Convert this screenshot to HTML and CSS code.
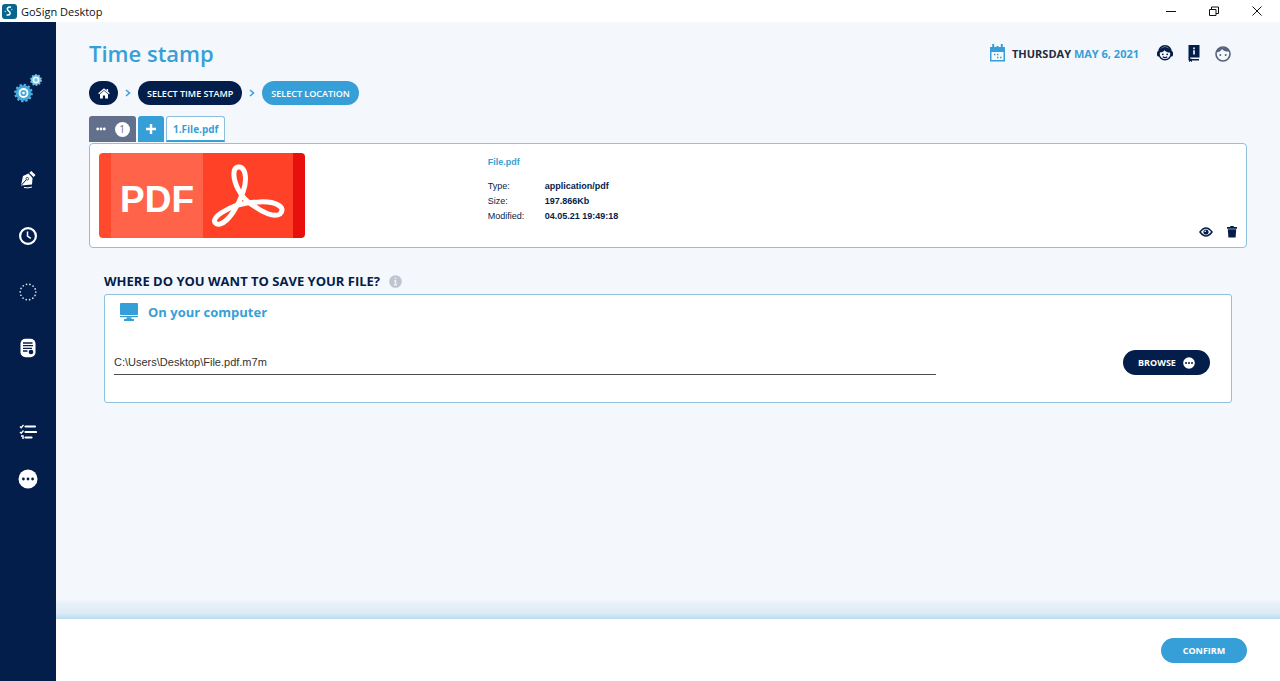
FILE: index.html
```
<!DOCTYPE html>
<html lang="en">
<head>
  <meta charset="UTF-8">
  <meta name="viewport" content="width=device-width, initial-scale=1">
  <title>GoSign Desktop</title>
  <link rel="stylesheet" href="styles.css">
</head>
<body>
  <div class="titlebar">
    <svg class="app-icon" width="15" height="15" viewBox="0 0 15 15" aria-hidden="true">
      <rect width="15" height="15" rx="3" fill="#07658f"/>
      <path d="M9 3.2C6 2.2 4 5 6.5 6.8S9 11.5 4.5 11" fill="none" stroke="#fff" stroke-width="1.5"/>
      <circle cx="3.3" cy="7.5" r=".8" fill="#9ed3ea"/>
      <circle cx="9.8" cy="5.5" r=".7" fill="#9ed3ea"/>
    </svg>
    <span class="app-name">GoSign Desktop</span>
    <div class="window-buttons">
      <button type="button" aria-label="Minimize"><svg width="12" height="12" viewBox="0 0 12 12"><path d="M1 6.500h10"/></svg></button>
      <button type="button" aria-label="Restore"><svg width="12" height="12" viewBox="0 0 12 12"><path d="M1.500 4.500h6.500v6h-6.500zM3.500 4.500v-2.500h7v6.500h-2.500"/></svg></button>
      <button type="button" aria-label="Close"><svg width="12" height="12" viewBox="0 0 12 12"><path d="M1.500 1.500l9 9M10.500 1.500l-9 9"/></svg></button>
    </div>
  </div>

  <div class="app">
    <nav class="sidebar" aria-label="Main menu">
      <div class="brand">
        <svg width="30" height="32" viewBox="0 0 30 32" aria-hidden="true">
          <circle cx="10.500" cy="21" r="8" fill="none" stroke="#58b5e0" stroke-width="2.500" stroke-dasharray="2.200 1.990"/>
          <circle cx="10.500" cy="21" r="7.800" fill="#45a9da"/>
          <circle cx="10.500" cy="21" r="4" fill="none" stroke="#fff" stroke-width="1.800"/>
          <circle cx="10.500" cy="21" r="1.300" fill="#fff"/>
          <circle cx="23" cy="8" r="5" fill="none" stroke="#58b5e0" stroke-width="2" stroke-dasharray="1.700 1.442"/>
          <circle cx="23" cy="8" r="5" fill="#7cc6e8"/>
          <circle cx="23" cy="8" r="2.600" fill="none" stroke="#fff" stroke-width="1.400"/>
        </svg>
      </div>
      <div class="menu">
        <button type="button" aria-label="Sign">
          <svg width="18" height="20" viewBox="0 0 18 20">
            <path d="M2 15.500L4 6l5.500-2.500 4 4.500-.5 6.500z" fill="#fff"/>
            <path d="M10.300 2.800l2-1.800 4.200 4-1.900 2z" fill="#fff"/>
            <path d="M2.500 15l5-5.500" stroke="#041e4b" stroke-width="1"/>
            <circle cx="8.300" cy="8.700" r="1.300" fill="#fff" stroke="#041e4b" stroke-width=".8"/>
            <path d="M5 17.500q4 1 8-.5" fill="none" stroke="#fff" stroke-width="1"/>
          </svg>
        </button>
        <button type="button" aria-label="Time stamp">
          <svg width="20" height="20" viewBox="0 0 20 20">
            <circle cx="10" cy="10" r="7.900" fill="none" stroke="#fff" stroke-width="2.200"/>
            <path d="M9.500 5.500V10l3.300 2.300" fill="none" stroke="#fff" stroke-width="1.500"/>
          </svg>
        </button>
        <button type="button" aria-label="Verify">
          <svg width="20" height="20" viewBox="0 0 20 20">
            <circle cx="10" cy="10" r="7.800" fill="none" stroke="#dfe7f2" stroke-width="1.700" stroke-linecap="round" stroke-dasharray="0 3.500"/>
          </svg>
        </button>
        <button type="button" aria-label="Documents">
          <svg width="18" height="20" viewBox="0 0 18 20">
            <rect x="1.500" y=".8" width="15" height="18.400" rx="5" fill="#fff"/>
            <path d="M4 5h9.500M4 7.700h10M4 10.400h9M4 13h4.500" stroke="#041e4b" stroke-width="1.300"/>
            <circle cx="12" cy="14" r="2.300" fill="#041e4b"/>
          </svg>
        </button>
      </div>
      <div class="menu menu-small">
        <button type="button" aria-label="Activities">
          <svg width="18" height="16" viewBox="0 0 18 16">
            <path d="M6.500 2.500h9.500M6.500 8h10.500M6.500 13.500h6" stroke="#fff" stroke-width="2.200" stroke-linecap="round"/>
            <path d="M1 2.500l1.200 1.200L4.500 1M1 8l1.200 1.200L4.500 6.500" fill="none" stroke="#fff" stroke-width="1.300"/>
            <path d="M2 12h2v3" fill="none" stroke="#fff" stroke-width="1.500"/>
          </svg>
        </button>
        <button type="button" aria-label="More">
          <svg width="20" height="20" viewBox="0 0 20 20">
            <circle cx="10" cy="10" r="9.500" fill="#fff"/>
            <g fill="#041e4b"><circle cx="5.400" cy="10" r="1.400"/><circle cx="10" cy="10" r="1.400"/><circle cx="14.600" cy="10" r="1.400"/></g>
          </svg>
        </button>
      </div>
    </nav>

    <div class="page">
      <main class="content">
        <header class="page-header">
          <h1>Time stamp</h1>
          <div class="date">
            <svg width="17" height="18" viewBox="0 0 17 18" aria-hidden="true">
              <path d="M1 3h15v14.500H1z" fill="#379fd7"/>
              <path d="M2.500 8h12v8h-12z" fill="#f6f8fb"/>
              <path d="M4.200 0v5M8.500 2v2M12.800 0v5" stroke="#379fd7" stroke-width="2"/>
              <path d="M5 10.500h1.500M8 10.500h1.500M8 13.500h1.500M11 13.500h1.500" stroke="#379fd7" stroke-width="1.500"/>
            </svg>
            <span>THURSDAY <b>MAY 6, 2021</b></span>
          </div>
          <div class="header-actions">
            <button type="button" aria-label="Support">
              <svg width="18" height="18" viewBox="0 0 18 18">
                <path d="M2.800 8a6.200 6.200 0 0112.400 0" fill="none" stroke="#041e4b" stroke-width="1.500"/>
                <rect x="1" y="7" width="3" height="5.500" rx="1.500" fill="#041e4b"/>
                <rect x="14" y="7" width="3" height="5.500" rx="1.500" fill="#041e4b"/>
                <circle cx="9" cy="9.800" r="6" fill="#f6f8fb" stroke="#041e4b" stroke-width="1.500"/>
                <path d="M3.500 8.500c2.500 0 4-1 5-2.300 1.200 1.500 3 2.300 6 2.300C14.500 2 3.500 2 3.500 8.500z" fill="#041e4b"/>
                <circle cx="6.800" cy="10.300" r=".9" fill="#041e4b"/><circle cx="11.200" cy="10.300" r=".9" fill="#041e4b"/>
                <path d="M6.800 12.800q2.200 1.600 4.400 0" fill="none" stroke="#041e4b" stroke-width="1.200"/>
              </svg>
            </button>
            <button type="button" aria-label="Guide">
              <svg width="18" height="18" viewBox="0 0 18 18">
                <path d="M3.500 1h11v12.500h-11z" fill="#041e4b"/>
                <path d="M4.300 13v2.700H14" fill="none" stroke="#041e4b" stroke-width="1.500"/>
                <path d="M4 14v4l1.500-1 1.500 1v-3z" fill="#041e4b"/>
                <path d="M9 3.500v1.700M9 6.200v4.300" stroke="#fff" stroke-width="1.600"/>
              </svg>
            </button>
            <button type="button" aria-label="Profile">
              <svg width="18" height="18" viewBox="0 0 18 18">
                <circle cx="9" cy="10" r="7" fill="none" stroke="#56617a" stroke-width="1.600"/>
                <path d="M2.500 8.500C5 8.200 7 7 8 5c2 2 4 2.800 7.500 2.500C14 2.500 4 1.500 2.500 8.500z" fill="#56617a"/>
                <circle cx="6.300" cy="11" r="1" fill="#56617a"/><circle cx="11.700" cy="11" r="1" fill="#56617a"/>
              </svg>
            </button>
          </div>
        </header>

        <nav class="steps" aria-label="Steps">
          <a class="step step-home" href="#" aria-label="Home">
            <svg width="12" height="11" viewBox="0 0 12 11">
              <path d="M.6 5.800L6 1.200l5.400 4.600" fill="none" stroke="#fff" stroke-width="1.300"/>
              <path d="M8.600 1h1.500v3L8.600 2.700z" fill="#fff"/>
              <path d="M2 6.300l4-3.500 4 3.500v4.200H7.100V7.600H4.900v2.900H2z" fill="#fff"/>
            </svg>
          </a>
          <svg class="arrow" width="6" height="8" viewBox="0 0 6 8" aria-hidden="true"><path d="M1 1l3.500 3L1 7"/></svg>
          <a class="step" href="#">SELECT TIME STAMP</a>
          <svg class="arrow" width="6" height="8" viewBox="0 0 6 8" aria-hidden="true"><path d="M1 1l3.500 3L1 7"/></svg>
          <a class="step step-active" href="#" aria-current="step">SELECT LOCATION</a>
        </nav>

        <div class="tabs">
          <button class="tab tab-menu" type="button" aria-label="Open files: 1">
            <svg width="10" height="4" viewBox="0 0 10 4" aria-hidden="true"><g fill="#fff"><circle cx="1.700" cy="2" r="1.400"/><circle cx="5" cy="2" r="1.400"/><circle cx="8.300" cy="2" r="1.400"/></g></svg>
            <span class="count">1</span>
          </button>
          <button class="tab tab-add" type="button" aria-label="Add file">
            <svg width="10" height="10" viewBox="0 0 10 10"><path d="M5 0v10M0 5h10" stroke="#fff" stroke-width="2.400"/></svg>
          </button>
          <button class="tab tab-file" type="button">1.File.pdf</button>
        </div>

        <section class="file-panel">
          <div class="preview">
            <span>PDF</span>
            <svg width="76" height="64" viewBox="0 0 76 64" aria-hidden="true">
              <path d="M27 3C21 4 22 15 27 25C31 33 36 38 43 42C51 48 63 54 69 50C76 43 64 37 48 38C34 38 21 42 10 49C0 56 3 61 9 60C18 58 28 40 32 28C37 14 34 2 27 3Z" fill="none" stroke="#fff" stroke-width="5" stroke-linejoin="round"/>
            </svg>
          </div>
          <div class="details">
            <h2>File.pdf</h2>
            <dl>
              <dt>Type:</dt><dd>application/pdf</dd>
              <dt>Size:</dt><dd>197.866Kb</dd>
              <dt>Modified:</dt><dd>04.05.21 19:49:18</dd>
            </dl>
          </div>
          <div class="file-actions">
            <button type="button" aria-label="View">
              <svg width="14" height="10" viewBox="0 0 14 10">
                <path d="M1 5q6-8 12 0-6 8-12 0z" fill="#fff" stroke="#041e4b" stroke-width="1.500"/>
                <circle cx="7" cy="5" r="2.600" fill="#041e4b"/><circle cx="6.200" cy="4.200" r=".8" fill="#fff"/>
              </svg>
            </button>
            <button type="button" aria-label="Delete">
              <svg width="10" height="12" viewBox="0 0 10 12">
                <path d="M0 1h3l.5-1h3L7 1h3v1.700H0zM.8 3.300h8.400l-.6 8.200H1.400z" fill="#041e4b"/>
              </svg>
            </button>
          </div>
        </section>

        <section class="destination">
          <h2>
            <label for="path">WHERE DO YOU WANT TO SAVE YOUR FILE?</label>
            <svg width="13" height="13" viewBox="0 0 13 13" aria-hidden="true">
              <circle cx="6.500" cy="6.500" r="6.300" fill="#bfc4ce"/>
              <path d="M6.500 2.500v1.700M5.200 5.700h1.300v4M5 9.700h3" fill="none" stroke="#edf0f5" stroke-width="1.500"/>
            </svg>
          </h2>
          <div class="card">
            <h3>
              <svg width="20" height="18" viewBox="0 0 20 18" aria-hidden="true">
                <rect x="1" width="18" height="12" rx="1" fill="#379fd7"/>
                <path d="M1 13h18v1.300H1zM7.500 14.500h5v1.500H15v2H5v-2h2.500z" fill="#379fd7"/>
              </svg>
              On your computer
            </h3>
            <div class="path-row">
              <input type="text" id="path" value="C:\Users\Desktop\File.pdf.m7m">
              <button class="btn btn-dark" type="button">
                BROWSE
                <svg width="12" height="12" viewBox="0 0 12 12" aria-hidden="true">
                  <circle cx="6" cy="6" r="5.800" fill="#fff"/>
                  <g fill="#041e4b"><circle cx="3" cy="6" r="1"/><circle cx="6" cy="6" r="1"/><circle cx="9" cy="6" r="1"/></g>
                </svg>
              </button>
            </div>
          </div>
        </section>
      </main>

      <footer class="footer">
        <button class="btn btn-confirm" type="button">CONFIRM</button>
      </footer>
    </div>
  </div>
</body>
</html>
```
FILE: styles.css
```
* {
  box-sizing: border-box;
}

body {
  margin: 0;
  min-height: 100vh;
  display: flex;
  flex-direction: column;
  font-family: "Open Sans", "Noto Sans", sans-serif;
  color: #041e4b;
  background: #fff;
}

h1, h2, h3, dl, dd {
  margin: 0;
}

svg {
  display: block;
  flex: none;
}

button {
  display: flex;
  align-items: center;
  justify-content: center;
  padding: 0;
  border: none;
  background: none;
  font-family: inherit;
  cursor: pointer;
}

/* window bar */
.titlebar {
  display: flex;
  align-items: center;
  height: 22px;
  padding-left: 2px;
  color: #111;
  font-size: 11px;
}

.app-name {
  margin-left: 4px;
}

.window-buttons {
  display: flex;
  height: 20px;
  margin-left: auto;
  padding-right: 2px;
}

.window-buttons button {
  width: 43px;
}

.window-buttons path {
  fill: none;
  stroke: #111;
  stroke-width: 1;
}

.app {
  flex: 1;
  display: flex;
}

/* left menu */
.sidebar {
  width: 56px;
  flex: none;
  background: #041e4b;
}

.brand {
  height: 130px;
  padding: 50px 13px 0;
}

.menu button {
  width: 100%;
  height: 56px;
}

.menu-small {
  margin-top: 32px;
}

.menu-small button {
  height: 47px;
}

.page {
  flex: 1;
  min-width: 0;
  display: flex;
  flex-direction: column;
}

.content {
  flex: 1;
  padding: 16px 33px;
  background: linear-gradient(to top, #b9dcf1 0, #dcebf5 6px, #e9f1f8 16px, #f4f7fb 20px, #f4f7fb 100%);
}

.page-header {
  display: flex;
  align-items: center;
  height: 30px;
}

h1 {
  margin-right: auto;
  font-size: 22px;
  font-weight: 600;
  color: #379fd7;
}

.date {
  display: flex;
  align-items: center;
  gap: 6px;
  font-size: 11px;
  font-weight: 700;
  color: #222b3c;
}

.date b {
  font-weight: 700;
  color: #379fd7;
}

.header-actions {
  display: flex;
  gap: 11px;
  margin: 0 15px 0 17px;
}

/* breadcrumb */
.steps {
  display: flex;
  align-items: center;
  gap: 7px;
  margin-top: 13px;
}

.step {
  display: flex;
  align-items: center;
  height: 24px;
  padding: 0 9px;
  border-radius: 12px;
  background: #041e4b;
  color: #fff;
  font-size: 9px;
  font-weight: 600;
  text-decoration: none;
}

.step-home {
  width: 29px;
}

.step-active {
  background: #379fd7;
}

.arrow path {
  fill: none;
  stroke: #379fd7;
  stroke-width: 1.5;
}

/* file tabs */
.tabs {
  display: flex;
  gap: 2px;
  height: 27px;
  margin-top: 11px;
}

.tab {
  height: 26px;
  border-radius: 3px 3px 0 0;
}

.tab-menu {
  width: 47px;
  gap: 9px;
  background: #63708b;
}

.count {
  width: 15px;
  border-radius: 50%;
  background: #fff;
  color: #63708b;
  font-size: 10px;
  line-height: 15px;
}

.tab-add {
  width: 26px;
  background: #379fd7;
}

.tab-file {
  padding: 0 6px;
  border: 1px solid #8abfe0;
  border-bottom: 2px solid #379fd7;
  background: #fff;
  color: #379fd7;
  font-size: 10px;
  font-weight: 700;
}

.file-panel {
  display: grid;
  grid-template-columns: 1fr 2fr;
  column-gap: 14px;
  padding: 9px;
  border: 1px solid #8fc0dc;
  border-radius: 4px;
  background: #fff;
}

.preview {
  grid-area: 1 / 1;
  display: flex;
  align-items: center;
  gap: 17px;
  width: 206px;
  height: 85px;
  padding-left: 21px;
  border-radius: 4px;
  background: linear-gradient(to right, #ff4a2d 12px, #ff644b 12px 104px, #ff4127 104px 194px, #e8100c 194px);
  color: #fff;
  font-family: "Liberation Sans", Arial, sans-serif;
  font-size: 37px;
  font-weight: bold;
}

.preview span {
  padding-top: 8px;
}

.details {
  grid-area: 1 / 2;
  padding-top: 2px;
  font-family: "Liberation Sans", Arial, sans-serif;
  font-size: 9px;
  line-height: 15px;
}

.details h2 {
  margin-bottom: 9px;
  font-size: 9px;
  color: #379fd7;
}

.details dl {
  display: grid;
  grid-template-columns: 57px 1fr;
}

.details dd {
  font-weight: bold;
}

/* shares the right column with the details */
.file-actions {
  grid-area: 1 / 2;
  display: flex;
  align-items: center;
  align-self: end;
  justify-self: end;
  gap: 14px;
}

/* save location */
.destination {
  margin: 24px 15px 0;
}

.destination h2 {
  display: flex;
  align-items: center;
  gap: 9px;
  height: 18px;
  font-size: 13px;
  font-weight: 700;
}

.card {
  margin-top: 4px;
  padding: 6px 21px 27px 9px;
  border: 1px solid #8fc0dc;
  border-radius: 3px;
  background: #fff;
}

.card h3 {
  display: flex;
  align-items: center;
  gap: 9px;
  height: 22px;
  padding-left: 5px;
  font-size: 13px;
  font-weight: 700;
  color: #379fd7;
}

.path-row {
  display: flex;
  align-items: center;
  justify-content: space-between;
  margin-top: 27px;
}

.path-row input {
  width: 75%;
  height: 25px;
  padding: 0;
  border: none;
  border-bottom: 1px solid #4d4d4d;
  background: none;
  color: #333;
  font-family: "Liberation Sans", Arial, sans-serif;
  font-size: 11px;
}

.btn {
  height: 25px;
  border-radius: 13px;
  color: #fff;
  font-size: 9px;
  font-weight: 700;
}

.btn-dark {
  gap: 7px;
  width: 87px;
  background: #041e4b;
}

.footer {
  display: flex;
  align-items: center;
  justify-content: flex-end;
  height: 62px;
  padding: 0 33px;
  background: #fff;
}

.btn-confirm {
  width: 86px;
  background: #379fd7;
}
```
